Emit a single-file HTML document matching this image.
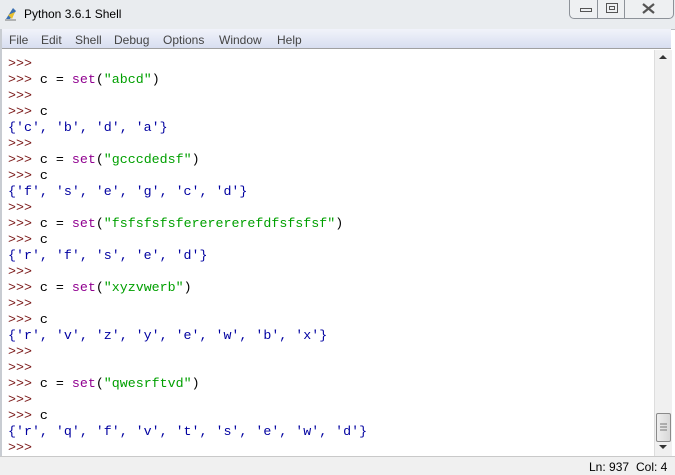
<!DOCTYPE html><html><head><style>
body{margin:0;width:675px;height:474px;overflow:hidden;background:#fff;font-family:"Liberation Sans",sans-serif;position:relative}
.title{position:absolute;left:0;top:0;width:675px;height:29px;background:#e9ecef;border-bottom:1px solid #b9bcc0}
.title span{position:absolute;left:24px;top:7px;font-size:12px;color:#000}
.icon{position:absolute;left:4px;top:6px;width:14px;height:15px}
.btns{position:absolute;left:569px;top:0;width:103px;height:18px;border:1px solid #8d9299;border-top:none;border-radius:0 0 5px 5px;background:#eef0f2}
.btns div{position:absolute;top:0;height:18px;border-right:1px solid #8d9299}
.menu{position:absolute;left:2px;top:29px;width:669px;height:19px;background:linear-gradient(#f1f3fa,#d8def0);border-bottom:1px solid #a0a0a0;font-size:12px;color:#444}
.menu span{position:absolute;top:4px}
.frameL{position:absolute;left:0;top:29px;width:2px;height:428px;background:#c8ccd2}
.text{position:absolute;left:3px;top:50px;width:650px;height:405px;font-family:"Liberation Mono",monospace;font-size:13.3px;line-height:16px;white-space:pre;padding:6px 0 0 5px;box-sizing:border-box}
.p{color:#7a1818}.k{color:#900090}.s{color:#00a000}.o{color:#0000a0}
.sb{position:absolute;left:654px;top:50px;width:17px;height:406px;background:#f0f0f0;border-left:1px solid #ddd}
.thumb{position:absolute;left:656px;top:413px;width:13px;height:27px;border:1px solid #8a8a8a;border-radius:2px;background:linear-gradient(90deg,#eee,#d8d8d8)}
.status{position:absolute;left:0;top:456px;width:675px;height:18px;background:#f0f0f0;border-top:1px solid #c9c9c9;font-size:12px}
</style></head><body>
<div class="title"><svg class="icon" viewBox="0 0 14 15"><path d="M2 13 L9 2 L12 5 L6 13Z" fill="#3a6fb0"/><path d="M4 9 L11 6 L8 13Z" fill="#e8c030"/><path d="M1 14h11" stroke="#777"/></svg><span>Python 3.6.1 Shell</span>
<div class="btns"><div style="left:0;width:27px"></div><div style="left:28px;width:26px"></div>
<svg style="position:absolute;left:10px;top:8px" width="12" height="5"><rect x="0.5" y="0.5" width="11" height="3" fill="none" stroke="#555"/></svg>
<svg style="position:absolute;left:36px;top:3px" width="12" height="10"><rect x="0.5" y="0.5" width="11" height="9" fill="none" stroke="#555"/><rect x="3.5" y="3.5" width="5" height="3" fill="none" stroke="#555"/></svg>
<svg style="position:absolute;left:72px;top:3px" width="13" height="11"><path d="M1 1L12 10M12 1L1 10" stroke="#555" stroke-width="2.2"/></svg></div></div>
<div class="frameL"></div>
<div class="menu"><span style="left:7px">File</span><span style="left:39px">Edit</span><span style="left:73px">Shell</span><span style="left:112px">Debug</span><span style="left:161px">Options</span><span style="left:217px">Window</span><span style="left:275px">Help</span></div>
<div class="text"><span class="p">&gt;&gt;&gt;</span>
<span class="p">&gt;&gt;&gt;</span> c = <span class="k">set</span>(<span class="s">"abcd"</span>)
<span class="p">&gt;&gt;&gt;</span>
<span class="p">&gt;&gt;&gt;</span> c
<span class="o">{'c', 'b', 'd', 'a'}</span>
<span class="p">&gt;&gt;&gt;</span>
<span class="p">&gt;&gt;&gt;</span> c = <span class="k">set</span>(<span class="s">"gcccdedsf"</span>)
<span class="p">&gt;&gt;&gt;</span> c
<span class="o">{'f', 's', 'e', 'g', 'c', 'd'}</span>
<span class="p">&gt;&gt;&gt;</span>
<span class="p">&gt;&gt;&gt;</span> c = <span class="k">set</span>(<span class="s">"fsfsfsfsfererererefdfsfsfsf"</span>)
<span class="p">&gt;&gt;&gt;</span> c
<span class="o">{'r', 'f', 's', 'e', 'd'}</span>
<span class="p">&gt;&gt;&gt;</span>
<span class="p">&gt;&gt;&gt;</span> c = <span class="k">set</span>(<span class="s">"xyzvwerb"</span>)
<span class="p">&gt;&gt;&gt;</span>
<span class="p">&gt;&gt;&gt;</span> c
<span class="o">{'r', 'v', 'z', 'y', 'e', 'w', 'b', 'x'}</span>
<span class="p">&gt;&gt;&gt;</span>
<span class="p">&gt;&gt;&gt;</span>
<span class="p">&gt;&gt;&gt;</span> c = <span class="k">set</span>(<span class="s">"qwesrftvd"</span>)
<span class="p">&gt;&gt;&gt;</span>
<span class="p">&gt;&gt;&gt;</span> c
<span class="o">{'r', 'q', 'f', 'v', 't', 's', 'e', 'w', 'd'}</span>
<span class="p">&gt;&gt;&gt;</span> </div>
<div class="sb"><svg style="position:absolute;left:4px;top:5px" width="8" height="5"><path d="M0 4L4 0L8 4Z" fill="#333"/></svg><svg style="position:absolute;left:4px;top:395px" width="8" height="5"><path d="M0 0L8 0L4 4Z" fill="#333"/></svg></div>
<div class="thumb"><svg style="position:absolute;left:3px;top:9px" width="7" height="8"><path d="M0 1h7M0 4h7M0 7h7" stroke="#777"/></svg></div>
<div class="status"><span style="position:absolute;left:589px;top:3px">Ln: 937</span><span style="position:absolute;left:636px;top:3px">Col: 4</span></div>
</body></html>
